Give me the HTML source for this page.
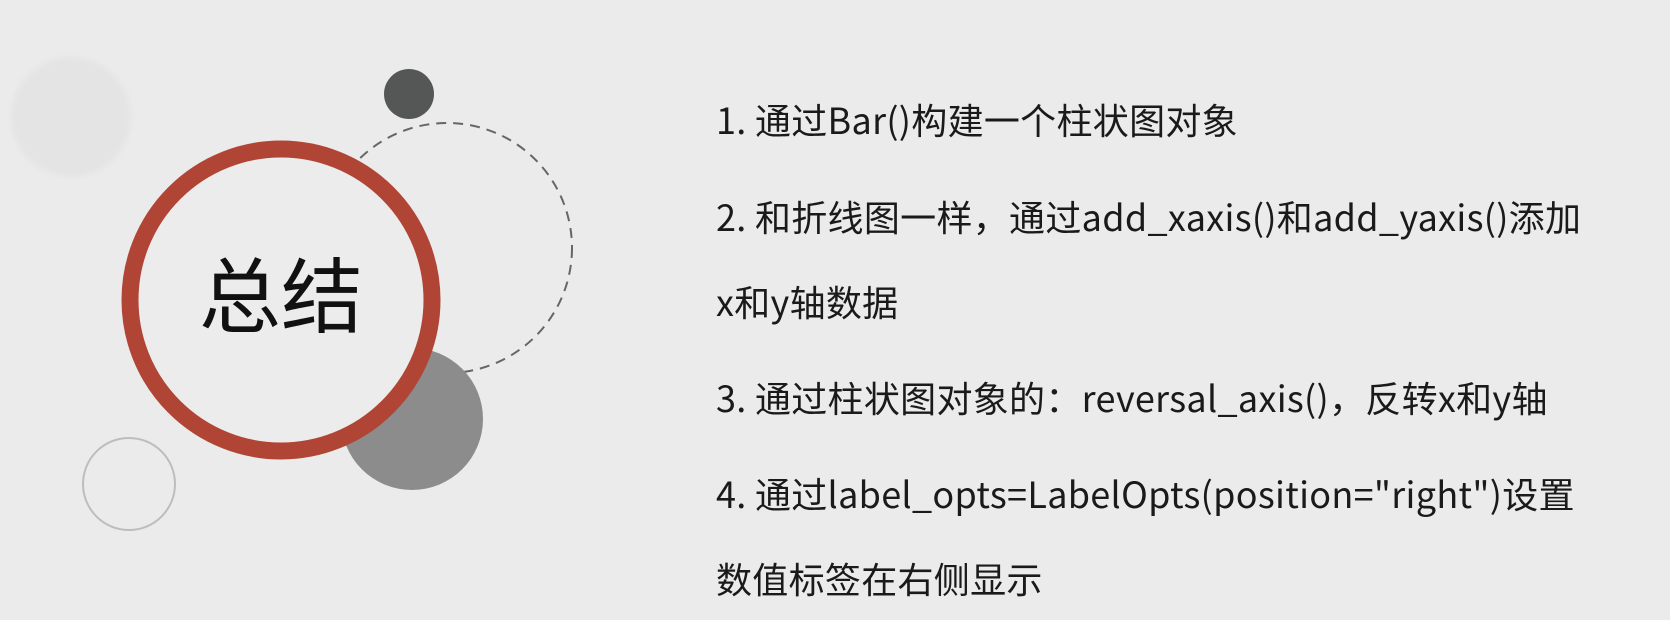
<!DOCTYPE html>
<html><head><meta charset="utf-8"><style>
html,body{margin:0;padding:0}
body{width:1670px;height:620px;background:#ebebeb;position:relative;overflow:hidden;font-family:"Liberation Sans","Noto Sans CJK SC",sans-serif;color:#1a1a1a}
.l{position:absolute;left:716px;font-size:36px;line-height:40px;letter-spacing:0.3px;white-space:nowrap;font-family:"Noto Sans CJK SC",sans-serif}
</style></head><body>
<svg width="1670" height="620" style="position:absolute;left:0;top:0">
<defs><filter id="b"><feGaussianBlur stdDeviation="3"/></filter></defs>
<circle cx="71" cy="117" r="60" fill="#e4e4e4" filter="url(#b)"/>
<circle cx="409" cy="94" r="25" fill="#555756"/>
<circle cx="447" cy="248" r="125" fill="none" stroke="#666" stroke-width="2" stroke-dasharray="10,7"/>
<circle cx="412" cy="419" r="71" fill="#8c8c8c"/>
<circle cx="129" cy="484" r="46" fill="none" stroke="#bdbdbd" stroke-width="2"/>
<circle cx="281" cy="300" r="151" fill="#ececec" stroke="#b04535" stroke-width="17"/>
<text x="281" y="326" text-anchor="middle" font-size="82" font-family="Noto Sans CJK SC, sans-serif" fill="#111">总结</text>
</svg>
<div class="l" style="top:99px">1. 通过Bar()构建一个柱状图对象</div>
<div class="l" style="top:196px">2. 和折线图一样，通过add_xaxis()和add_yaxis()添加</div>
<div class="l" style="top:281px">x和y轴数据</div>
<div class="l" style="top:377px">3. 通过柱状图对象的：reversal_axis()，反转x和y轴</div>
<div class="l" style="top:473px">4. 通过label_opts=LabelOpts(position="right")设置</div>
<div class="l" style="top:558px">数值标签在右侧显示</div>
</body></html>
